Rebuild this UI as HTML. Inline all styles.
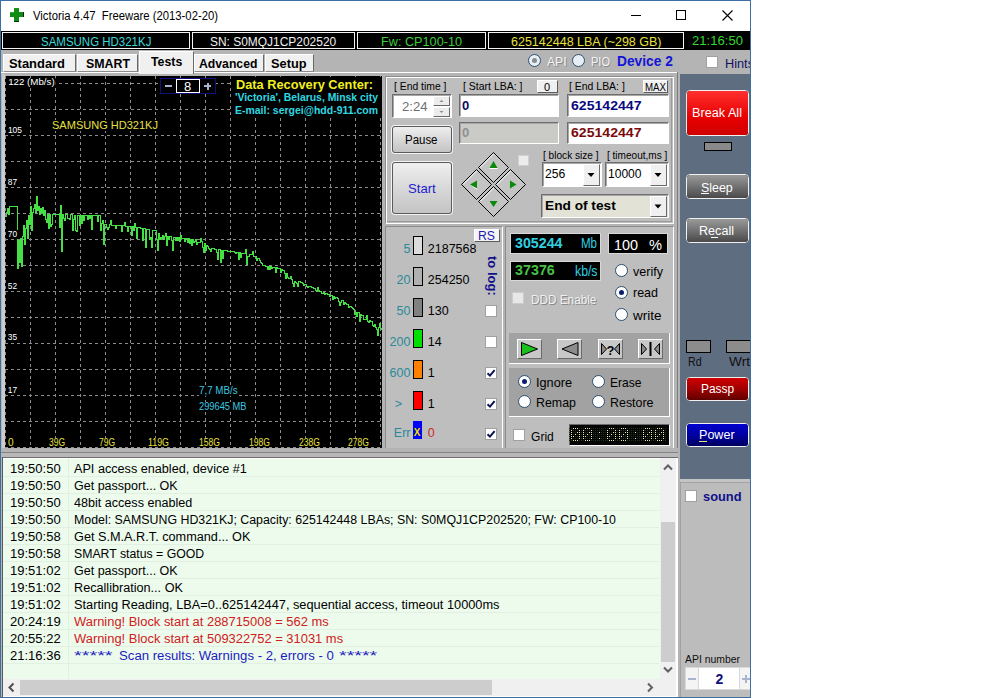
<!DOCTYPE html>
<html><head><meta charset="utf-8"><style>
html,body{margin:0;padding:0;background:#fff;}
body{width:1008px;height:698px;overflow:hidden;position:relative;font-family:'Liberation Sans', sans-serif;}
body>div,body>svg{position:absolute;white-space:pre;}
</style></head><body>
<div style="left:0px;top:0px;width:751px;height:698px;background:#fff"></div>
<div style="left:1px;top:31px;width:749px;height:666px;background:#b4b4b4"></div>
<div style="left:1px;top:1px;width:749px;height:30px;background:#fff"></div>
<div style="left:14px;top:8px;width:5px;height:14px;background:#0e8c14"></div>
<div style="left:10px;top:12px;width:14px;height:5px;background:#0e8c14"></div>
<div style="left:14px;top:21px;width:5px;height:1px;background:#032a03"></div>
<div style="left:23px;top:12px;width:1px;height:5px;background:#032a03"></div>
<div style="left:10px;top:12px;width:4px;height:1px;background:#30b030"></div>
<div style="left:14px;top:8px;width:5px;height:1px;background:#1a9a1a"></div>
<div style="left:33.3px;top:10.24px;font-size:12px;line-height:12px;font-weight:400;color:#000;transform:scaleX(0.9413);transform-origin:0 0;">Victoria 4.47  Freeware (2013-02-20)</div>
<div style="left:631px;top:15px;width:10px;height:1px;background:#000"></div>
<div style="left:676px;top:10px;width:10px;height:10px;border:1px solid #000;box-sizing:border-box"></div>
<svg style="left:722px;top:10px" width="11" height="11" viewBox="0 0 11 11"><path d="M0.5 0.5L10.5 10.5M10.5 0.5L0.5 10.5" stroke="#000" stroke-width="1.1"/></svg>
<div style="left:1px;top:31px;width:749px;height:19px;background:#000"></div>
<div style="left:2px;top:32px;width:188px;height:17px;border:1px solid #f4f4f4;box-sizing:border-box"></div>
<div style="left:192px;top:32px;width:163px;height:17px;border:1px solid #f4f4f4;box-sizing:border-box"></div>
<div style="left:357px;top:32px;width:129px;height:17px;border:1px solid #f4f4f4;box-sizing:border-box"></div>
<div style="left:488px;top:32px;width:196px;height:17px;border:1px solid #f4f4f4;box-sizing:border-box"></div>
<div style="left:40.6px;top:35.84px;font-size:12px;line-height:12px;font-weight:400;color:#3cd8d8;transform:scaleX(0.9569);transform-origin:0 0;">SAMSUNG HD321KJ</div>
<div style="left:210.0px;top:35.84px;font-size:12px;line-height:12px;font-weight:400;color:#f0f0f0;transform:scaleX(0.9958);transform-origin:0 0;">SN: S0MQJ1CP202520</div>
<div style="left:380.5px;top:35.84px;font-size:12px;line-height:12px;font-weight:400;color:#3ccc3c;transform:scaleX(1.0560);transform-origin:0 0;">Fw: CP100-10</div>
<div style="left:510.8px;top:35.84px;font-size:12px;line-height:12px;font-weight:400;color:#e8e040;transform:scaleX(1.0419);transform-origin:0 0;">625142448 LBA (~298 GB)</div>
<div style="left:691.5px;top:35.42px;font-size:12.5px;line-height:12.5px;font-weight:400;color:#30d830;transform:scaleX(1.0478);transform-origin:0 0;">21:16:50</div>
<div style="left:3px;top:54px;width:73px;height:18px;background:#f0f0f0;border-top:1px solid #fff;border-left:1px solid #fff;border-right:1px solid #696969;box-sizing:border-box;border-bottom:1px solid #a0a0a0"></div>
<div style="left:4px;top:71px;width:72px;height:1px;background:#8c8c8c"></div>
<div style="left:9.0px;top:57.30px;font-size:13px;line-height:13px;font-weight:700;color:#000;transform:scaleX(0.9939);transform-origin:0 0;">Standard</div>
<div style="left:77px;top:54px;width:61px;height:18px;background:#f0f0f0;border-top:1px solid #fff;border-left:1px solid #fff;border-right:1px solid #696969;box-sizing:border-box;border-bottom:1px solid #a0a0a0"></div>
<div style="left:78px;top:71px;width:60px;height:1px;background:#8c8c8c"></div>
<div style="left:86.0px;top:57.30px;font-size:13px;line-height:13px;font-weight:700;color:#000;transform:scaleX(0.9520);transform-origin:0 0;">SMART</div>
<div style="left:139px;top:51px;width:55px;height:23px;background:#f0f0f0;border-top:1px solid #fff;border-left:1px solid #fff;border-right:1px solid #696969;box-sizing:border-box;"></div>
<div style="left:150.7px;top:55.30px;font-size:13px;line-height:13px;font-weight:700;color:#000;transform:scaleX(0.9485);transform-origin:0 0;">Tests</div>
<div style="left:194px;top:54px;width:70px;height:18px;background:#f0f0f0;border-top:1px solid #fff;border-left:1px solid #fff;border-right:1px solid #696969;box-sizing:border-box;border-bottom:1px solid #a0a0a0"></div>
<div style="left:195px;top:71px;width:69px;height:1px;background:#8c8c8c"></div>
<div style="left:199.0px;top:57.30px;font-size:13px;line-height:13px;font-weight:700;color:#000;transform:scaleX(0.9398);transform-origin:0 0;">Advanced</div>
<div style="left:265px;top:54px;width:49px;height:18px;background:#f0f0f0;border-top:1px solid #fff;border-left:1px solid #fff;border-right:1px solid #696969;box-sizing:border-box;border-bottom:1px solid #a0a0a0"></div>
<div style="left:266px;top:71px;width:48px;height:1px;background:#8c8c8c"></div>
<div style="left:270.5px;top:57.30px;font-size:13px;line-height:13px;font-weight:700;color:#000;transform:scaleX(0.9827);transform-origin:0 0;">Setup</div>
<div style="left:1px;top:72px;width:138px;height:1px;background:#fff"></div>
<div style="left:194px;top:72px;width:483px;height:1px;background:#fff"></div>
<div style="left:677px;top:72px;width:1px;height:378px;background:#7c7c7c"></div>
<div style="left:527.9px;top:53.9px;width:13px;height:13px;border-radius:50%;border:1px solid #2c4e6e;box-sizing:border-box;background:#e6eef6"></div>
<div style="left:531.9px;top:57.9px;width:5px;height:5px;border-radius:50%;background:#8a8a8a"></div>
<div style="left:547.0px;top:55.84px;font-size:12px;line-height:12px;font-weight:400;color:#f4f4f4;transform:scaleX(1.0132);transform-origin:0 0;text-shadow:1px 1px 0 #8a8a8a">API</div>
<div style="left:572.0px;top:53.9px;width:13px;height:13px;border-radius:50%;border:1px solid #2c4e6e;box-sizing:border-box;background:#e6eef6"></div>
<div style="left:591.4px;top:55.84px;font-size:12px;line-height:12px;font-weight:400;color:#f4f4f4;transform:scaleX(0.9191);transform-origin:0 0;text-shadow:1px 1px 0 #8a8a8a">PIO</div>
<div style="left:616.7px;top:54.15px;font-size:14px;line-height:14px;font-weight:700;color:#1414d8;transform:scaleX(0.9819);transform-origin:0 0;">Device 2</div>
<div style="left:706px;top:56px;width:12px;height:12px;background:#fff;border:1px solid #a0a0a0;box-sizing:border-box"></div>
<div style="left:724.8px;top:57.00px;font-size:13px;line-height:13px;font-weight:400;color:#12125e;transform:scaleX(0.9789);transform-origin:0 0;">Hints</div>
<div style="left:2px;top:74px;width:3px;height:376px;background:#cccccc"></div>
<div style="left:5px;top:76px;width:377px;height:372px;background:#000"></div>
<svg style="left:5px;top:76px" width="377" height="372" viewBox="5 76 377 372"><path d="M5.5 76V448M30.5 76V448M55.5 76V448M80.5 76V448M105.5 76V448M130.5 76V448M155.5 76V448M180.5 76V448M205.5 76V448M230.5 76V448M255.5 76V448M280.5 76V448M305.5 76V448M330.5 76V448M355.5 76V448M380.5 76V448M5 83.5H382M5 109.5H382M5 135.5H382M5 161.5H382M5 187.5H382M5 213.5H382M5 239.5H382M5 265.5H382M5 291.5H382M5 317.5H382M5 343.5H382M5 369.5H382M5 395.5H382M5 421.5H382M5 447.5H382" stroke="#8c8c8c" stroke-width="1" stroke-dasharray="3 3" fill="none"/><path d="M5 216.5H6V212.5H7V208.5H8V214.5H9V206.5H10V206.5H11V206.5H12V206.5H13V206.5H14V206.5H15V206.5H16V206.5H17V268.5H18V240.5H19V262.5H20V238.5H21V266.5H22V236.5H23V225.5H24V244.5H25V228.5H26V220.5H27V238.5H28V215.5H29V224.5H30V206.5H31V230.5H32V212.5H33V208.5H34V204.5H35V212.5H36V196.5H37V210.5H38V206.5H39V214.5H40V208.5H41V212.5H42V207.5H43V215.5H44V210.5H45V219.5H46V222.5H47V214.5H48V228.5H49V214.5H50V226.5H51V224.5H52V214.5H53V214.5H54V214.5H55V214.5H56V214.5H57V214.5H58V214.5H59V227.5H60V205.5H61V251.5H62V214.5H63V218.5H64V220.5H65V214.5H66V214.5H67V218.5H68V218.5H69V219.5H70V214.5H71V214.5H72V230.5H73V219.5H74V215.5H75V230.5H76V231.5H77V215.5H78V215.5H79V225.5H80V215.5H81V223.5H82V215.5H83V220.5H84V215.5H85V215.5H86V215.5H87V219.5H88V215.5H89V218.5H90V215.5H91V229.5H92V215.5H93V215.5H94V215.5H95V215.5H96V215.5H97V221.5H98V215.5H99V215.5H100V230.5H101V223.5H102V220.5H103V244.5H104V224.5H105V224.5H106V227.5H107V229.5H108V227.5H109V224.5H110V220.5H111V225.5H112V225.5H113V225.5H114V225.5H115V228.5H116V225.5H117V225.5H118V225.5H119V225.5H120V225.5H121V231.5H122V225.5H123V225.5H124V222.5H125V226.5H126V226.5H127V231.5H128V226.5H129V226.5H130V226.5H131V235.5H132V226.5H133V230.5H134V223.5H135V227.5H136V238.5H137V227.5H138V227.5H139V227.5H140V228.5H141V228.5H142V240.5H143V228.5H144V228.5H145V247.5H146V229.5H147V229.5H148V229.5H149V239.5H150V237.5H151V247.5H152V230.5H153V230.5H154V230.5H155V230.5H156V239.5H157V250.5H158V233.5H159V239.5H160V237.5H161V238.5H162V235.5H163V239.5H164V236.5H165V233.5H166V245.5H167V236.5H168V239.5H169V236.5H170V236.5H171V240.5H172V250.5H173V237.5H174V237.5H175V240.5H176V237.5H177V240.5H178V237.5H179V241.5H180V235.5H181V238.5H182V238.5H183V238.5H184V241.5H185V238.5H186V238.5H187V242.5H188V238.5H189V243.5H190V239.5H191V245.5H192V239.5H193V242.5H194V241.5H195V239.5H196V244.5H197V242.5H198V242.5H199V242.5H200V238.5H201V241.5H202V247.5H203V252.5H204V243.5H205V250.5H206V245.5H207V246.5H208V248.5H209V249.5H210V251.5H211V248.5H212V248.5H213V248.5H214V249.5H215V249.5H216V252.5H217V259.5H218V249.5H219V249.5H220V262.5H221V250.5H222V258.5H223V250.5H224V250.5H225V250.5H226V250.5H227V251.5H228V251.5H229V251.5H230V251.5H231V251.5H232V251.5H233V251.5H234V252.5H235V253.5H236V252.5H237V252.5H238V259.5H239V252.5H240V257.5H241V253.5H242V253.5H243V253.5H244V253.5H245V249.5H246V264.5H247V256.5H248V256.5H249V254.5H250V254.5H251V254.5H252V251.5H253V256.5H254V256.5H255V256.5H256V260.5H257V258.5H258V258.5H259V260.5H260V262.5H261V263.5H262V265.5H263V265.5H264V265.5H265V266.5H266V266.5H267V269.5H268V266.5H269V269.5H270V266.5H271V268.5H272V267.5H273V267.5H274V267.5H275V272.5H276V267.5H277V268.5H278V268.5H279V268.5H280V272.5H281V269.5H282V270.5H283V270.5H284V273.5H285V278.5H286V273.5H287V277.5H288V278.5H289V278.5H290V276.5H291V279.5H292V283.5H293V286.5H294V281.5H295V282.5H296V283.5H297V286.5H298V281.5H299V281.5H300V282.5H301V282.5H302V283.5H303V285.5H304V284.5H305V284.5H306V286.5H307V287.5H308V286.5H309V286.5H310V286.5H311V287.5H312V287.5H313V288.5H314V288.5H315V290.5H316V291.5H317V287.5H318V290.5H319V291.5H320V291.5H321V293.5H322V293.5H323V292.5H324V294.5H325V293.5H326V293.5H327V294.5H328V294.5H329V296.5H330V295.5H331V295.5H332V299.5H333V296.5H334V298.5H335V297.5H336V297.5H337V298.5H338V301.5H339V305.5H340V302.5H341V300.5H342V300.5H343V304.5H344V302.5H345V303.5H346V304.5H347V304.5H348V307.5H349V306.5H350V306.5H351V307.5H352V308.5H353V309.5H354V314.5H355V312.5H356V316.5H357V312.5H358V312.5H359V321.5H360V314.5H361V315.5H362V315.5H363V319.5H364V319.5H365V319.5H366V315.5H367V321.5H368V322.5H369V320.5H370V321.5H371V321.5H372V325.5H373V326.5H374V324.5H375V327.5H376V329.5H377V335.5H378V327.5H379V323.5H380V328.5H381V329.5" stroke="#44e044" stroke-width="1" fill="none" shape-rendering="crispEdges"/></svg>
<div style="left:5.5px;top:77.78px;font-size:9px;line-height:9px;font-weight:400;color:#fff;transform:scaleX(1.0810);transform-origin:0 0;background:#000;padding:0 1px 0 2px">122 (Mb/s)</div>
<div style="left:5.5px;top:126.38px;font-size:9px;line-height:9px;font-weight:400;color:#fff;transform:scaleX(0.9447);transform-origin:0 0;background:#000;padding:0 1px 0 2px">105</div>
<div style="left:5.5px;top:178.38px;font-size:9px;line-height:9px;font-weight:400;color:#fff;transform:scaleX(0.9285);transform-origin:0 0;background:#000;padding:0 1px 0 2px">87</div>
<div style="left:5.5px;top:230.38px;font-size:9px;line-height:9px;font-weight:400;color:#fff;transform:scaleX(0.9285);transform-origin:0 0;background:#000;padding:0 1px 0 2px">70</div>
<div style="left:5.5px;top:282.38px;font-size:9px;line-height:9px;font-weight:400;color:#fff;transform:scaleX(0.9285);transform-origin:0 0;background:#000;padding:0 1px 0 2px">52</div>
<div style="left:5.5px;top:333.38px;font-size:9px;line-height:9px;font-weight:400;color:#fff;transform:scaleX(0.9285);transform-origin:0 0;background:#000;padding:0 1px 0 2px">35</div>
<div style="left:5.5px;top:385.88px;font-size:9px;line-height:9px;font-weight:400;color:#fff;transform:scaleX(0.9285);transform-origin:0 0;background:#000;padding:0 1px 0 2px">17</div>
<div style="left:49.0px;top:437.54px;font-size:10px;line-height:10px;font-weight:400;color:#e8e040;transform:scaleX(0.8463);transform-origin:0 0;background:#000">39G</div>
<div style="left:99.0px;top:437.54px;font-size:10px;line-height:10px;font-weight:400;color:#e8e040;transform:scaleX(0.8463);transform-origin:0 0;background:#000">79G</div>
<div style="left:148.0px;top:437.54px;font-size:10px;line-height:10px;font-weight:400;color:#e8e040;transform:scaleX(0.8848);transform-origin:0 0;background:#000">119G</div>
<div style="left:199.0px;top:437.54px;font-size:10px;line-height:10px;font-weight:400;color:#e8e040;transform:scaleX(0.8582);transform-origin:0 0;background:#000">158G</div>
<div style="left:249.0px;top:437.54px;font-size:10px;line-height:10px;font-weight:400;color:#e8e040;transform:scaleX(0.8582);transform-origin:0 0;background:#000">198G</div>
<div style="left:299.0px;top:437.54px;font-size:10px;line-height:10px;font-weight:400;color:#e8e040;transform:scaleX(0.8582);transform-origin:0 0;background:#000">238G</div>
<div style="left:348.0px;top:437.54px;font-size:10px;line-height:10px;font-weight:400;color:#e8e040;transform:scaleX(0.8582);transform-origin:0 0;background:#000">278G</div>
<div style="left:8.0px;top:437.54px;font-size:10px;line-height:10px;font-weight:400;color:#e8e040;background:#000">0</div>
<svg style="left:5px;top:447px" width="377" height="1" viewBox="5 447 377 1"><path d="M5 447.5H382" stroke="#8c8c8c" stroke-dasharray="3 3"/></svg>
<div style="left:51.5px;top:119.69px;font-size:11px;line-height:11px;font-weight:400;color:#e8e040;transform:scaleX(1.0022);transform-origin:0 0;background:#000">SAMSUNG HD321KJ</div>
<div style="left:199.0px;top:385.54px;font-size:10px;line-height:10px;font-weight:400;color:#3cc8e0;transform:scaleX(0.9780);transform-origin:0 0;background:#000">7,7 MB/s</div>
<div style="left:199.0px;top:401.54px;font-size:10px;line-height:10px;font-weight:400;color:#3cc8e0;transform:scaleX(0.9285);transform-origin:0 0;background:#000">299645 MB</div>
<div style="left:160px;top:78px;width:56px;height:16px;background:#000;border:1px solid #10107a;box-sizing:border-box"></div>
<div style="left:176px;top:79px;width:24px;height:14px;border:1px solid #fff;box-sizing:border-box;background:#000"></div>
<div style="left:184.0px;top:80.00px;font-size:13px;line-height:13px;font-weight:400;color:#fff;">8</div>
<div style="left:165px;top:85px;width:7px;height:2px;background:#a8b4d0"></div>
<div style="left:204px;top:85px;width:7px;height:2px;background:#a8b4d0"></div>
<div style="left:206.5px;top:82.5px;width:2px;height:7px;background:#a8b4d0"></div>
<div style="left:233px;top:77px;width:148px;height:40px;background:#000"></div>
<div style="left:235.7px;top:78.84px;font-size:12px;line-height:12px;font-weight:700;color:#f0f020;transform:scaleX(1.0643);transform-origin:0 0;background:#000">Data Recovery Center:</div>
<div style="left:234.5px;top:92.19px;font-size:11px;line-height:11px;font-weight:700;color:#30d8e0;transform:scaleX(0.9460);transform-origin:0 0;background:#000">'Victoria', Belarus, Minsk city</div>
<div style="left:234.5px;top:104.69px;font-size:11px;line-height:11px;font-weight:700;color:#30d8e0;transform:scaleX(0.9526);transform-origin:0 0;background:#000">E-mail: sergei@hdd-911.com</div>
<div style="left:385px;top:76px;width:288px;height:147px;border:1px solid #8c8c8c;box-sizing:border-box"></div>
<div style="left:386px;top:77px;width:288px;height:147px;border:1px solid #fff;box-sizing:border-box;background:#bebebe"></div>
<div style="left:387px;top:78px;width:285px;height:144px;border-right:1px solid #9a9a9a;border-bottom:1px solid #9a9a9a;box-sizing:border-box"></div>
<div style="left:394.3px;top:81.19px;font-size:11px;line-height:11px;font-weight:400;color:#000;transform:scaleX(0.9418);transform-origin:0 0;">[ End time ]</div>
<div style="left:463.3px;top:81.19px;font-size:11px;line-height:11px;font-weight:400;color:#000;transform:scaleX(0.9541);transform-origin:0 0;">[ Start LBA: ]</div>
<div style="left:569.4px;top:81.19px;font-size:11px;line-height:11px;font-weight:400;color:#000;transform:scaleX(0.9505);transform-origin:0 0;">[ End LBA: ]</div>
<div style="left:392px;top:94px;width:60px;height:24px;background:#fff;border-top:1px solid #6e6e6e;border-left:1px solid #6e6e6e;border-right:1px solid #fff;border-bottom:1px solid #fff;box-sizing:border-box;box-shadow:inset 1px 1px 0 #a8a8a8"></div>
<div style="left:402.0px;top:100.00px;font-size:13px;line-height:13px;font-weight:400;color:#707070;transform:scaleX(1.0114);transform-origin:0 0;">2:24</div>
<div style="left:433px;top:96px;width:17px;height:10px;background:#ececec;border-top:1px solid #fff;border-left:1px solid #fff;border-right:1px solid #6a6a6a;border-bottom:1px solid #6a6a6a;box-sizing:border-box"></div>
<div style="left:433px;top:107px;width:17px;height:10px;background:#ececec;border-top:1px solid #fff;border-left:1px solid #fff;border-right:1px solid #6a6a6a;border-bottom:1px solid #6a6a6a;box-sizing:border-box"></div>
<svg style="left:433px;top:96px" width="17" height="21" viewBox="0 0 17 21"><path d="M6.5 6h4l-2-2z" fill="#8a8a8a"/><path d="M6.5 15h4l-2 2z" fill="#8a8a8a"/></svg>
<div style="left:459px;top:94px;width:100px;height:23px;background:#fff;border-top:1px solid #6e6e6e;border-left:1px solid #6e6e6e;border-right:1px solid #fff;border-bottom:1px solid #fff;box-sizing:border-box;box-shadow:inset 1px 1px 0 #a8a8a8"></div>
<div style="left:462.0px;top:99.00px;font-size:13px;line-height:13px;font-weight:700;color:#0a0a60;">0</div>
<div style="left:537px;top:80px;width:21px;height:13px;background:#f0f0f0;border-top:1px solid #fff;border-left:1px solid #fff;border-right:1px solid #5a5a5a;border-bottom:1px solid #5a5a5a;box-sizing:border-box"></div>
<div style="left:544.0px;top:81.69px;font-size:11px;line-height:11px;font-weight:400;color:#000;">0</div>
<div style="left:567px;top:94px;width:102px;height:23px;background:#fff;border-top:1px solid #6e6e6e;border-left:1px solid #6e6e6e;border-right:1px solid #fff;border-bottom:1px solid #fff;box-sizing:border-box;box-shadow:inset 1px 1px 0 #a8a8a8"></div>
<div style="left:570.5px;top:98.50px;font-size:13px;line-height:13px;font-weight:700;color:#0a0a80;transform:scaleX(1.0833);transform-origin:0 0;">625142447</div>
<div style="left:643px;top:80px;width:25px;height:13px;background:#f0f0f0;border-top:1px solid #fff;border-left:1px solid #fff;border-right:1px solid #5a5a5a;border-bottom:1px solid #5a5a5a;box-sizing:border-box"></div>
<div style="left:645.0px;top:81.69px;font-size:11px;line-height:11px;font-weight:400;color:#000;transform:scaleX(0.8807);transform-origin:0 0;">MAX</div>
<div style="left:459px;top:122px;width:100px;height:22px;background:#cacac6;border-top:1px solid #6e6e6e;border-left:1px solid #6e6e6e;border-right:1px solid #fff;border-bottom:1px solid #fff;box-sizing:border-box;box-shadow:inset 1px 1px 0 #a8a8a8"></div>
<div style="left:462.0px;top:126.00px;font-size:13px;line-height:13px;font-weight:700;color:#909090;">0</div>
<div style="left:567px;top:122px;width:102px;height:22px;background:#fff;border-top:1px solid #6e6e6e;border-left:1px solid #6e6e6e;border-right:1px solid #fff;border-bottom:1px solid #fff;box-sizing:border-box;box-shadow:inset 1px 1px 0 #a8a8a8"></div>
<div style="left:570.5px;top:126.00px;font-size:13px;line-height:13px;font-weight:700;color:#7a0a0a;transform:scaleX(1.0833);transform-origin:0 0;">625142447</div>
<div style="left:392px;top:126px;width:60px;height:27px;border-radius:3px;border:1px solid #5a5a5a;box-sizing:border-box;background:linear-gradient(#efefef,#d8d8d8 50%,#c4c4c4);box-shadow:0 0 0 1px #f4f4f4"></div>
<div style="left:404.6px;top:133.84px;font-size:12px;line-height:12px;font-weight:400;color:#000;transform:scaleX(0.9550);transform-origin:0 0;">Pause</div>
<div style="left:392px;top:162px;width:60px;height:52px;border-radius:3px;border:1px solid #5a5a5a;box-sizing:border-box;background:linear-gradient(#efefef,#d8d8d8 50%,#c4c4c4);box-shadow:0 0 0 1px #f4f4f4"></div>
<div style="left:407.8px;top:182.00px;font-size:13px;line-height:13px;font-weight:400;color:#1c1cd0;transform:scaleX(1.0084);transform-origin:0 0;">Start</div>
<svg style="left:458px;top:150px" width="72" height="72" viewBox="458 150 72 72"><g stroke="#000" stroke-width="1" fill="#c4c4c4"><path d="M493.5 152.5 L508.5 167.5 L493.5 182.5 L478.5 167.5 Z"/><path d="M510.5 169.5 L525.5 184.5 L510.5 199.5 L495.5 184.5 Z"/><path d="M493.5 186.5 L508.5 201.5 L493.5 216.5 L478.5 201.5 Z"/><path d="M476.5 169.5 L491.5 184.5 L476.5 199.5 L461.5 184.5 Z"/></g><g stroke="#fff" stroke-width="1" fill="none"><path d="M480 167.5 L493.5 154"/><path d="M497 184.5 L510.5 171"/><path d="M480 201.5 L493.5 188"/><path d="M463 184.5 L476.5 171"/></g><g fill="#0a8a0a"><path d="M489.5 168 h8 l-4 -7z"/><path d="M489.5 201 h8 l-4 6z"/><path d="M477 180.5 v8 l-7 -4z"/><path d="M510 180.5 v8 l6.5 -4z"/></g><g fill="#fff"><path d="M489.5 168 h8 v1 h-8z"/><path d="M477 188.5 v1 l-7 -4.5z"/></g></svg>
<div style="left:518px;top:155px;width:11px;height:11px;background:#ececec;border:1px solid #d0d0d0;box-sizing:border-box"></div>
<div style="left:542.7px;top:150.19px;font-size:11px;line-height:11px;font-weight:400;color:#000;transform:scaleX(0.9185);transform-origin:0 0;">[ block size ]</div>
<div style="left:607.0px;top:150.19px;font-size:11px;line-height:11px;font-weight:400;color:#000;transform:scaleX(0.9132);transform-origin:0 0;">[ timeout,ms ]</div>
<div style="left:542px;top:162px;width:60px;height:25px;background:#fff;border-top:1px solid #6e6e6e;border-left:1px solid #6e6e6e;border-right:1px solid #fff;border-bottom:1px solid #fff;box-sizing:border-box;box-shadow:inset 1px 1px 0 #a8a8a8"></div>
<div style="left:583px;top:164px;width:17px;height:22px;background:#f0f0f0;border-top:1px solid #fff;border-left:1px solid #fff;border-right:1px solid #6a6a6a;border-bottom:1px solid #6a6a6a;box-sizing:border-box"></div>
<svg style="left:583px;top:164px" width="17" height="22" viewBox="0 0 17 22"><path d="M4.5 9.0 h7 l-3.5 4z" fill="#000"/></svg>
<div style="left:545.0px;top:167.30px;font-size:13px;line-height:13px;font-weight:400;color:#000;transform:scaleX(0.9353);transform-origin:0 0;">256</div>
<div style="left:605px;top:162px;width:64px;height:25px;background:#fff;border-top:1px solid #6e6e6e;border-left:1px solid #6e6e6e;border-right:1px solid #fff;border-bottom:1px solid #fff;box-sizing:border-box;box-shadow:inset 1px 1px 0 #a8a8a8"></div>
<div style="left:650px;top:164px;width:17px;height:22px;background:#f0f0f0;border-top:1px solid #fff;border-left:1px solid #fff;border-right:1px solid #6a6a6a;border-bottom:1px solid #6a6a6a;box-sizing:border-box"></div>
<svg style="left:650px;top:164px" width="17" height="22" viewBox="0 0 17 22"><path d="M4.5 9.0 h7 l-3.5 4z" fill="#000"/></svg>
<div style="left:608.0px;top:167.30px;font-size:13px;line-height:13px;font-weight:400;color:#000;transform:scaleX(0.9265);transform-origin:0 0;">10000</div>
<div style="left:541px;top:194px;width:128px;height:24px;background:#e2e2d6;border-top:1px solid #6e6e6e;border-left:1px solid #6e6e6e;border-right:1px solid #fff;border-bottom:1px solid #fff;box-sizing:border-box;box-shadow:inset 1px 1px 0 #a8a8a8"></div>
<div style="left:650px;top:196px;width:17px;height:21px;background:#f0f0f0;border-top:1px solid #fff;border-left:1px solid #fff;border-right:1px solid #6a6a6a;border-bottom:1px solid #6a6a6a;box-sizing:border-box"></div>
<svg style="left:650px;top:196px" width="17" height="21" viewBox="0 0 17 21"><path d="M4.5 8.5 h7 l-3.5 4z" fill="#000"/></svg>
<div style="left:545.0px;top:198.80px;font-size:13px;line-height:13px;font-weight:700;color:#000;transform:scaleX(1.0525);transform-origin:0 0;">End of test</div>
<div style="left:385px;top:226px;width:117px;height:222px;border:1px solid #8c8c8c;box-sizing:border-box"></div>
<div style="left:386px;top:227px;width:117px;height:222px;border-right:1px solid #fff;border-bottom:1px solid #fff;box-sizing:border-box;background:#bebebe"></div>
<div style="left:474px;top:229px;width:26px;height:13px;background:#f4f4f4;border-top:1px solid #fff;border-left:1px solid #fff;border-right:1px solid #5a5a5a;border-bottom:1px solid #5a5a5a;box-sizing:border-box"></div>
<div style="left:478.0px;top:229.84px;font-size:12px;line-height:12px;font-weight:400;color:#1c1cb0;transform:scaleX(1.0197);transform-origin:0 0;">RS</div>
<div style="left:403.5px;top:243.02px;font-size:12.5px;line-height:12.5px;font-weight:400;color:#2a8a9a;">5</div>
<div style="left:413px;top:236px;width:10px;height:19px;background:#dcdcdc;border:1px solid #000;box-sizing:border-box"></div>
<div style="left:427.8px;top:243.02px;font-size:12.5px;line-height:12.5px;font-weight:400;color:#000;">2187568</div>
<div style="left:396.6px;top:274.02px;font-size:12.5px;line-height:12.5px;font-weight:400;color:#2a8a9a;">20</div>
<div style="left:413px;top:267px;width:10px;height:19px;background:#b0b0b0;border:1px solid #000;box-sizing:border-box"></div>
<div style="left:427.8px;top:274.02px;font-size:12.5px;line-height:12.5px;font-weight:400;color:#000;">254250</div>
<div style="left:396.6px;top:305.02px;font-size:12.5px;line-height:12.5px;font-weight:400;color:#2a8a9a;">50</div>
<div style="left:413px;top:298px;width:10px;height:19px;background:#808080;border:1px solid #000;box-sizing:border-box"></div>
<div style="left:427.8px;top:305.02px;font-size:12.5px;line-height:12.5px;font-weight:400;color:#000;">130</div>
<div style="left:485px;top:305px;width:12px;height:12px;background:#fff;border:1px solid #a0a0a0;box-sizing:border-box"></div>
<div style="left:389.6px;top:336.02px;font-size:12.5px;line-height:12.5px;font-weight:400;color:#2a8a9a;">200</div>
<div style="left:413px;top:329px;width:10px;height:19px;background:#00e000;border:1px solid #000;box-sizing:border-box"></div>
<div style="left:427.8px;top:336.02px;font-size:12.5px;line-height:12.5px;font-weight:400;color:#000;">14</div>
<div style="left:485px;top:336px;width:12px;height:12px;background:#fff;border:1px solid #a0a0a0;box-sizing:border-box"></div>
<div style="left:389.6px;top:367.02px;font-size:12.5px;line-height:12.5px;font-weight:400;color:#2a8a9a;">600</div>
<div style="left:413px;top:360px;width:10px;height:19px;background:#ff8000;border:1px solid #000;box-sizing:border-box"></div>
<div style="left:427.8px;top:367.02px;font-size:12.5px;line-height:12.5px;font-weight:400;color:#000;">1</div>
<div style="left:485px;top:367px;width:12px;height:12px;background:#fff;border:1px solid #a0a0a0;box-sizing:border-box"></div>
<svg style="left:485px;top:367px" width="12" height="12" viewBox="0 0 12 12"><path d="M2.5 6.2L5 8.6L9.6 3.2" stroke="#0a1450" stroke-width="2" fill="none"/></svg>
<div style="left:394.7px;top:398.02px;font-size:12.5px;line-height:12.5px;font-weight:400;color:#2a8a9a;">&gt;</div>
<div style="left:413px;top:391px;width:10px;height:19px;background:#ff0000;border:1px solid #000;box-sizing:border-box"></div>
<div style="left:427.8px;top:398.02px;font-size:12.5px;line-height:12.5px;font-weight:400;color:#000;">1</div>
<div style="left:485px;top:398px;width:12px;height:12px;background:#fff;border:1px solid #a0a0a0;box-sizing:border-box"></div>
<svg style="left:485px;top:398px" width="12" height="12" viewBox="0 0 12 12"><path d="M2.5 6.2L5 8.6L9.6 3.2" stroke="#0a1450" stroke-width="2" fill="none"/></svg>
<div style="left:393.8px;top:426.62px;font-size:12.5px;line-height:12.5px;font-weight:400;color:#2a8a9a;">Err</div>
<div style="left:413px;top:421px;width:10px;height:19px;background:#0000ff;width:9px;height:18px"></div>
<div style="left:427.8px;top:426.62px;font-size:12.5px;line-height:12.5px;font-weight:400;color:#d02828;">0</div>
<div style="left:485px;top:428px;width:12px;height:12px;background:#fff;border:1px solid #a0a0a0;box-sizing:border-box"></div>
<svg style="left:485px;top:428px" width="12" height="12" viewBox="0 0 12 12"><path d="M2.5 6.2L5 8.6L9.6 3.2" stroke="#0a1450" stroke-width="2" fill="none"/></svg>
<div style="left:413.8px;top:427.54px;font-size:10px;line-height:10px;font-weight:700;color:#f0e020;text-shadow:0 0 1px #000">X</div>
<div style="left:484px;top:256px;width:16px;height:42px;"><div style="position:absolute;left:0;top:0;transform-origin:0 0;transform:translate(15px,0) rotate(90deg);font:700 13px 'Liberation Sans', sans-serif;color:#10108a;white-space:nowrap;line-height:13px">to log:</div></div>
<div style="left:505px;top:226px;width:168px;height:222px;border:1px solid #8c8c8c;box-sizing:border-box"></div>
<div style="left:506px;top:227px;width:168px;height:222px;border-right:1px solid #fff;border-bottom:1px solid #fff;box-sizing:border-box;background:#bebebe"></div>
<div style="left:510px;top:233px;width:91px;height:21px;background:#000;border:1px solid #d8d8d8;box-sizing:border-box"></div>
<div style="left:515.0px;top:235.65px;font-size:14px;line-height:14px;font-weight:700;color:#30d0e0;transform:scaleX(1.0167);transform-origin:0 0;">305244</div>
<div style="left:580.5px;top:236.15px;font-size:14px;line-height:14px;font-weight:400;color:#30d0e0;transform:scaleX(0.8225);transform-origin:0 0;">Mb</div>
<div style="left:608px;top:233px;width:60px;height:21px;background:#000;border:1px solid #d8d8d8;box-sizing:border-box"></div>
<div style="left:614.0px;top:237.30px;font-size:15px;line-height:15px;font-weight:400;color:#fff;transform:scaleX(0.9588);transform-origin:0 0;">100</div>
<div style="left:649.0px;top:237.30px;font-size:15px;line-height:15px;font-weight:400;color:#fff;transform:scaleX(0.9742);transform-origin:0 0;">%</div>
<div style="left:510px;top:261px;width:91px;height:20px;background:#000;border:1px solid #d8d8d8;box-sizing:border-box"></div>
<div style="left:515.0px;top:263.35px;font-size:14px;line-height:14px;font-weight:700;color:#48c048;transform:scaleX(1.0222);transform-origin:0 0;">37376</div>
<div style="left:574.6px;top:264.15px;font-size:14px;line-height:14px;font-weight:400;color:#30d0e0;transform:scaleX(0.8759);transform-origin:0 0;">kb/s</div>
<div style="left:512px;top:292px;width:12px;height:12px;background:#e8e8e8;border:1px solid #cccccc;box-sizing:border-box"></div>
<div style="left:531.0px;top:293.84px;font-size:12px;line-height:12px;font-weight:400;color:#f0f0f0;transform:scaleX(0.9805);transform-origin:0 0;text-shadow:1px 1px 0 #8a8a8a">DDD Enable</div>
<div style="left:614.9px;top:264.0px;width:13px;height:13px;border-radius:50%;border:1px solid #2c4e6e;box-sizing:border-box;background:#fff"></div>
<div style="left:633.0px;top:264.50px;font-size:13px;line-height:13px;font-weight:400;color:#000;transform:scaleX(0.9658);transform-origin:0 0;">verify</div>
<div style="left:614.9px;top:285.8px;width:13px;height:13px;border-radius:50%;border:1px solid #2c4e6e;box-sizing:border-box;background:#fff"></div>
<div style="left:618.9px;top:289.8px;width:5px;height:5px;border-radius:50%;background:#0a1e6e"></div>
<div style="left:633.0px;top:286.30px;font-size:13px;line-height:13px;font-weight:400;color:#000;transform:scaleX(0.9604);transform-origin:0 0;">read</div>
<div style="left:614.9px;top:308.1px;width:13px;height:13px;border-radius:50%;border:1px solid #2c4e6e;box-sizing:border-box;background:#fff"></div>
<div style="left:633.0px;top:308.60px;font-size:13px;line-height:13px;font-weight:400;color:#000;transform:scaleX(1.0381);transform-origin:0 0;">write</div>
<div style="left:509px;top:333px;width:161px;height:31px;background:#a2a2a2;border-right:1px solid #fff;border-bottom:1px solid #fff;box-sizing:border-box"></div>
<div style="left:517px;top:339px;width:25px;height:20px;background:#c8c8c8;border-top:1px solid #fff;border-left:1px solid #fff;border-right:1px solid #6a6a6a;border-bottom:1px solid #6a6a6a;box-sizing:border-box"></div>
<div style="left:557px;top:339px;width:25px;height:20px;background:#c8c8c8;border-top:1px solid #fff;border-left:1px solid #fff;border-right:1px solid #6a6a6a;border-bottom:1px solid #6a6a6a;box-sizing:border-box"></div>
<div style="left:598px;top:339px;width:25px;height:20px;background:#c8c8c8;border-top:1px solid #fff;border-left:1px solid #fff;border-right:1px solid #6a6a6a;border-bottom:1px solid #6a6a6a;box-sizing:border-box"></div>
<div style="left:638px;top:339px;width:25px;height:20px;background:#c8c8c8;border-top:1px solid #fff;border-left:1px solid #fff;border-right:1px solid #6a6a6a;border-bottom:1px solid #6a6a6a;box-sizing:border-box"></div>
<svg style="left:517px;top:339px" width="150" height="20" viewBox="517 339 150 20"><path d="M521.5 342.5 L537.5 349 L521.5 355.5 Z" fill="#1cc01c" stroke="#000" stroke-width="1"/><path d="M578 342.5 L562 349 L578 355.5 Z" fill="#8c8c8c" stroke="#000" stroke-width="1"/><path d="M601.5 343.5 L606.5 349 L601.5 354.5 Z" fill="#8c8c8c" stroke="#000" stroke-width="1"/><path d="M619.5 343.5 L614.5 349 L619.5 354.5 Z" fill="#8c8c8c" stroke="#000" stroke-width="1"/><path d="M641.5 343.5 L646.5 349 L641.5 354.5 Z" fill="#8c8c8c" stroke="#000" stroke-width="1"/><path d="M659.5 343.5 L654.5 349 L659.5 354.5 Z" fill="#8c8c8c" stroke="#000" stroke-width="1"/><rect x="649.5" y="342" width="2" height="14" fill="#000"/></svg>
<div style="left:606.5px;top:344.00px;font-size:13px;line-height:13px;font-weight:700;color:#000;">?</div>
<div style="left:509px;top:368px;width:161px;height:49px;background:#a2a2a2;border-right:1px solid #fff;border-bottom:1px solid #fff;box-sizing:border-box"></div>
<div style="left:518.0px;top:375.3px;width:13px;height:13px;border-radius:50%;border:1px solid #2c4e6e;box-sizing:border-box;background:#fff"></div>
<div style="left:522.0px;top:379.3px;width:5px;height:5px;border-radius:50%;background:#0a1e6e"></div>
<div style="left:536.0px;top:375.80px;font-size:13px;line-height:13px;font-weight:400;color:#000;transform:scaleX(0.9763);transform-origin:0 0;">Ignore</div>
<div style="left:591.8px;top:375.3px;width:13px;height:13px;border-radius:50%;border:1px solid #2c4e6e;box-sizing:border-box;background:#fff"></div>
<div style="left:609.8px;top:375.80px;font-size:13px;line-height:13px;font-weight:400;color:#000;transform:scaleX(0.9244);transform-origin:0 0;">Erase</div>
<div style="left:518.0px;top:395.3px;width:13px;height:13px;border-radius:50%;border:1px solid #2c4e6e;box-sizing:border-box;background:#fff"></div>
<div style="left:536.0px;top:395.80px;font-size:13px;line-height:13px;font-weight:400;color:#000;transform:scaleX(0.9542);transform-origin:0 0;">Remap</div>
<div style="left:591.8px;top:395.3px;width:13px;height:13px;border-radius:50%;border:1px solid #2c4e6e;box-sizing:border-box;background:#fff"></div>
<div style="left:609.8px;top:395.80px;font-size:13px;line-height:13px;font-weight:400;color:#000;transform:scaleX(0.9554);transform-origin:0 0;">Restore</div>
<div style="left:513px;top:429px;width:12px;height:12px;background:#fff;border:1px solid #a0a0a0;box-sizing:border-box"></div>
<div style="left:531.0px;top:429.50px;font-size:13px;line-height:13px;font-weight:400;color:#000;transform:scaleX(0.9282);transform-origin:0 0;">Grid</div>
<div style="left:569px;top:424px;width:101px;height:22px;background:#050505;border-top:1px solid #6a6a6a;border-left:1px solid #6a6a6a;border-right:1px solid #fff;border-bottom:1px solid #fff;box-sizing:border-box"></div>
<svg style="left:0;top:0" width="680" height="450"><path d="M569 428h1v1h-1zM569 430h1v1h-1zM569 432h1v1h-1zM569 434h1v1h-1zM569 436h1v1h-1zM569 438h1v1h-1zM569 440h1v1h-1zM571 428h1v1h-1zM571 440h1v1h-1zM573 430h1v1h-1zM573 432h1v1h-1zM573 434h1v1h-1zM573 438h1v1h-1zM575 430h1v1h-1zM575 432h1v1h-1zM575 436h1v1h-1zM575 438h1v1h-1zM577 430h1v1h-1zM577 434h1v1h-1zM577 436h1v1h-1zM577 438h1v1h-1zM579 428h1v1h-1zM579 440h1v1h-1zM581 428h1v1h-1zM581 430h1v1h-1zM581 432h1v1h-1zM581 434h1v1h-1zM581 436h1v1h-1zM581 438h1v1h-1zM581 440h1v1h-1zM583 428h1v1h-1zM583 440h1v1h-1zM585 430h1v1h-1zM585 432h1v1h-1zM585 434h1v1h-1zM585 438h1v1h-1zM587 430h1v1h-1zM587 432h1v1h-1zM587 436h1v1h-1zM587 438h1v1h-1zM589 430h1v1h-1zM589 434h1v1h-1zM589 436h1v1h-1zM589 438h1v1h-1zM591 428h1v1h-1zM591 440h1v1h-1zM593 428h1v1h-1zM593 430h1v1h-1zM593 432h1v1h-1zM593 434h1v1h-1zM593 436h1v1h-1zM593 438h1v1h-1zM593 440h1v1h-1zM595 428h1v1h-1zM595 430h1v1h-1zM595 432h1v1h-1zM595 434h1v1h-1zM595 436h1v1h-1zM595 438h1v1h-1zM595 440h1v1h-1zM597 428h1v1h-1zM597 430h1v1h-1zM597 432h1v1h-1zM597 434h1v1h-1zM597 436h1v1h-1zM597 438h1v1h-1zM597 440h1v1h-1zM599 428h1v1h-1zM599 430h1v1h-1zM599 434h1v1h-1zM599 436h1v1h-1zM599 440h1v1h-1zM601 428h1v1h-1zM601 430h1v1h-1zM601 432h1v1h-1zM601 434h1v1h-1zM601 436h1v1h-1zM601 438h1v1h-1zM601 440h1v1h-1zM603 428h1v1h-1zM603 430h1v1h-1zM603 432h1v1h-1zM603 434h1v1h-1zM603 436h1v1h-1zM603 438h1v1h-1zM603 440h1v1h-1zM605 428h1v1h-1zM605 430h1v1h-1zM605 432h1v1h-1zM605 434h1v1h-1zM605 436h1v1h-1zM605 438h1v1h-1zM605 440h1v1h-1zM607 428h1v1h-1zM607 440h1v1h-1zM609 430h1v1h-1zM609 432h1v1h-1zM609 434h1v1h-1zM609 438h1v1h-1zM611 430h1v1h-1zM611 432h1v1h-1zM611 436h1v1h-1zM611 438h1v1h-1zM613 430h1v1h-1zM613 434h1v1h-1zM613 436h1v1h-1zM613 438h1v1h-1zM615 428h1v1h-1zM615 440h1v1h-1zM617 428h1v1h-1zM617 430h1v1h-1zM617 432h1v1h-1zM617 434h1v1h-1zM617 436h1v1h-1zM617 438h1v1h-1zM617 440h1v1h-1zM619 428h1v1h-1zM619 440h1v1h-1zM621 430h1v1h-1zM621 432h1v1h-1zM621 434h1v1h-1zM621 438h1v1h-1zM623 430h1v1h-1zM623 432h1v1h-1zM623 436h1v1h-1zM623 438h1v1h-1zM625 430h1v1h-1zM625 434h1v1h-1zM625 436h1v1h-1zM625 438h1v1h-1zM627 428h1v1h-1zM627 440h1v1h-1zM629 428h1v1h-1zM629 430h1v1h-1zM629 432h1v1h-1zM629 434h1v1h-1zM629 436h1v1h-1zM629 438h1v1h-1zM629 440h1v1h-1zM631 428h1v1h-1zM631 430h1v1h-1zM631 432h1v1h-1zM631 434h1v1h-1zM631 436h1v1h-1zM631 438h1v1h-1zM631 440h1v1h-1zM633 428h1v1h-1zM633 430h1v1h-1zM633 432h1v1h-1zM633 434h1v1h-1zM633 436h1v1h-1zM633 438h1v1h-1zM633 440h1v1h-1zM635 428h1v1h-1zM635 430h1v1h-1zM635 434h1v1h-1zM635 436h1v1h-1zM635 440h1v1h-1zM637 428h1v1h-1zM637 430h1v1h-1zM637 432h1v1h-1zM637 434h1v1h-1zM637 436h1v1h-1zM637 438h1v1h-1zM637 440h1v1h-1zM639 428h1v1h-1zM639 430h1v1h-1zM639 432h1v1h-1zM639 434h1v1h-1zM639 436h1v1h-1zM639 438h1v1h-1zM639 440h1v1h-1zM641 428h1v1h-1zM641 430h1v1h-1zM641 432h1v1h-1zM641 434h1v1h-1zM641 436h1v1h-1zM641 438h1v1h-1zM641 440h1v1h-1zM643 428h1v1h-1zM643 440h1v1h-1zM645 430h1v1h-1zM645 432h1v1h-1zM645 434h1v1h-1zM645 438h1v1h-1zM647 430h1v1h-1zM647 432h1v1h-1zM647 436h1v1h-1zM647 438h1v1h-1zM649 430h1v1h-1zM649 434h1v1h-1zM649 436h1v1h-1zM649 438h1v1h-1zM651 428h1v1h-1zM651 440h1v1h-1zM653 428h1v1h-1zM653 430h1v1h-1zM653 432h1v1h-1zM653 434h1v1h-1zM653 436h1v1h-1zM653 438h1v1h-1zM653 440h1v1h-1zM655 428h1v1h-1zM655 440h1v1h-1zM657 430h1v1h-1zM657 432h1v1h-1zM657 434h1v1h-1zM657 438h1v1h-1zM659 430h1v1h-1zM659 432h1v1h-1zM659 436h1v1h-1zM659 438h1v1h-1zM661 430h1v1h-1zM661 434h1v1h-1zM661 436h1v1h-1zM661 438h1v1h-1zM663 428h1v1h-1zM663 440h1v1h-1zM665 428h1v1h-1zM665 430h1v1h-1zM665 432h1v1h-1zM665 434h1v1h-1zM665 436h1v1h-1zM665 438h1v1h-1zM665 440h1v1h-1z" fill="#1e3220"/><path d="M571 430h1v1h-1zM571 432h1v1h-1zM571 434h1v1h-1zM571 436h1v1h-1zM571 438h1v1h-1zM573 428h1v1h-1zM573 436h1v1h-1zM573 440h1v1h-1zM575 428h1v1h-1zM575 434h1v1h-1zM575 440h1v1h-1zM577 428h1v1h-1zM577 432h1v1h-1zM577 440h1v1h-1zM579 430h1v1h-1zM579 432h1v1h-1zM579 434h1v1h-1zM579 436h1v1h-1zM579 438h1v1h-1zM583 430h1v1h-1zM583 432h1v1h-1zM583 434h1v1h-1zM583 436h1v1h-1zM583 438h1v1h-1zM585 428h1v1h-1zM585 436h1v1h-1zM585 440h1v1h-1zM587 428h1v1h-1zM587 434h1v1h-1zM587 440h1v1h-1zM589 428h1v1h-1zM589 432h1v1h-1zM589 440h1v1h-1zM591 430h1v1h-1zM591 432h1v1h-1zM591 434h1v1h-1zM591 436h1v1h-1zM591 438h1v1h-1zM599 432h1v1h-1zM599 438h1v1h-1zM607 430h1v1h-1zM607 432h1v1h-1zM607 434h1v1h-1zM607 436h1v1h-1zM607 438h1v1h-1zM609 428h1v1h-1zM609 436h1v1h-1zM609 440h1v1h-1zM611 428h1v1h-1zM611 434h1v1h-1zM611 440h1v1h-1zM613 428h1v1h-1zM613 432h1v1h-1zM613 440h1v1h-1zM615 430h1v1h-1zM615 432h1v1h-1zM615 434h1v1h-1zM615 436h1v1h-1zM615 438h1v1h-1zM619 430h1v1h-1zM619 432h1v1h-1zM619 434h1v1h-1zM619 436h1v1h-1zM619 438h1v1h-1zM621 428h1v1h-1zM621 436h1v1h-1zM621 440h1v1h-1zM623 428h1v1h-1zM623 434h1v1h-1zM623 440h1v1h-1zM625 428h1v1h-1zM625 432h1v1h-1zM625 440h1v1h-1zM627 430h1v1h-1zM627 432h1v1h-1zM627 434h1v1h-1zM627 436h1v1h-1zM627 438h1v1h-1zM635 432h1v1h-1zM635 438h1v1h-1zM643 430h1v1h-1zM643 432h1v1h-1zM643 434h1v1h-1zM643 436h1v1h-1zM643 438h1v1h-1zM645 428h1v1h-1zM645 436h1v1h-1zM645 440h1v1h-1zM647 428h1v1h-1zM647 434h1v1h-1zM647 440h1v1h-1zM649 428h1v1h-1zM649 432h1v1h-1zM649 440h1v1h-1zM651 430h1v1h-1zM651 432h1v1h-1zM651 434h1v1h-1zM651 436h1v1h-1zM651 438h1v1h-1zM655 430h1v1h-1zM655 432h1v1h-1zM655 434h1v1h-1zM655 436h1v1h-1zM655 438h1v1h-1zM657 428h1v1h-1zM657 436h1v1h-1zM657 440h1v1h-1zM659 428h1v1h-1zM659 434h1v1h-1zM659 440h1v1h-1zM661 428h1v1h-1zM661 432h1v1h-1zM661 440h1v1h-1zM663 430h1v1h-1zM663 432h1v1h-1zM663 434h1v1h-1zM663 436h1v1h-1zM663 438h1v1h-1z" fill="#ecebb4"/></svg>
<div style="left:678px;top:74px;width:2px;height:405px;background:#b4b4b4"></div>
<div style="left:680px;top:74px;width:70px;height:405px;background:#5f6d81"></div>
<div style="left:686px;top:90px;width:63px;height:46px;border-radius:4px;border:1px solid #f0f0f0;box-sizing:border-box;background:#000"></div>
<div style="left:687px;top:91px;width:61px;height:44px;border-radius:3px;background:linear-gradient(#ff3030,#e80000 60%,#d00000)"></div>
<div style="left:692.4px;top:106.92px;font-size:12.5px;line-height:12.5px;font-weight:400;color:#fff;transform:scaleX(1.0133);transform-origin:0 0;">Break All</div>
<div style="left:704px;top:142px;width:28px;height:9px;background:#8a8a8a;border:1px solid #000;box-sizing:border-box"></div>
<div style="left:686px;top:174px;width:63px;height:25px;border-radius:4px;border:1px solid #f0f0f0;box-sizing:border-box;background:#000"></div>
<div style="left:687px;top:175px;width:61px;height:23px;border-radius:3px;background:linear-gradient(#9a9a9a,#6e6e6e 55%,#4a4a4a)"></div>
<div style="left:701.0px;top:181.72px;font-size:12.5px;line-height:12.5px;font-weight:400;color:#fff;transform:scaleX(0.9942);transform-origin:0 0;">Sleep</div>
<div style="left:701px;top:192.5px;width:8px;height:1px;background:#fff"></div>
<div style="left:686px;top:218px;width:63px;height:25px;border-radius:4px;border:1px solid #f0f0f0;box-sizing:border-box;background:#000"></div>
<div style="left:687px;top:219px;width:61px;height:23px;border-radius:3px;background:linear-gradient(#9a9a9a,#6e6e6e 55%,#4a4a4a)"></div>
<div style="left:698.5px;top:225.42px;font-size:12.5px;line-height:12.5px;font-weight:400;color:#fff;transform:scaleX(1.0072);transform-origin:0 0;">Recall</div>
<div style="left:711px;top:236.6px;width:7px;height:1px;background:#fff"></div>
<div style="left:686px;top:340px;width:25px;height:13px;background:#8c8c8c;border:1px solid #000;box-sizing:border-box"></div>
<div style="left:726px;top:340px;width:24px;height:13px;background:#8c8c8c;border:1px solid #000;border-right:none;box-sizing:border-box"></div>
<div style="left:688.4px;top:355.00px;font-size:13px;line-height:13px;font-weight:400;color:#101010;transform:scaleX(0.8180);transform-origin:0 0;">Rd</div>
<div style="left:728.6px;top:355.00px;font-size:13px;line-height:13px;font-weight:400;color:#101010;transform:scaleX(1.0508);transform-origin:0 0;">Wrt</div>
<div style="left:686px;top:377px;width:63px;height:24px;border-radius:4px;border:1px solid #f0f0f0;box-sizing:border-box;background:#000"></div>
<div style="left:687px;top:378px;width:61px;height:22px;border-radius:3px;background:linear-gradient(#d00000,#a00000 50%,#600000)"></div>
<div style="left:701.0px;top:383.42px;font-size:12.5px;line-height:12.5px;font-weight:400;color:#fff;transform:scaleX(0.9554);transform-origin:0 0;">Passp</div>
<div style="left:686px;top:423px;width:63px;height:24px;border-radius:4px;border:1px solid #f0f0f0;box-sizing:border-box;background:#000"></div>
<div style="left:687px;top:424px;width:61px;height:22px;border-radius:3px;background:linear-gradient(#0000d0,#0000a0 50%,#000060)"></div>
<div style="left:699.0px;top:429.42px;font-size:12.5px;line-height:12.5px;font-weight:400;color:#fff;transform:scaleX(1.0046);transform-origin:0 0;">Power</div>
<div style="left:699px;top:441px;width:8px;height:1px;background:#e8e070"></div>
<div style="left:678px;top:479px;width:72px;height:218px;background:#b4b4b4"></div>
<div style="left:680px;top:479px;width:70px;height:3px;background:#c2c4c6"></div>
<div style="left:680px;top:482px;width:70px;height:1px;background:#a4a4a4"></div>
<div style="left:680px;top:482px;width:1px;height:215px;background:#a0a0a0"></div>
<div style="left:681px;top:483px;width:69px;height:214px;background:#bcbcbc"></div>
<div style="left:685px;top:490px;width:12px;height:12px;background:#fff;border:1px solid #a0a0a0;box-sizing:border-box"></div>
<div style="left:703.0px;top:489.50px;font-size:13px;line-height:13px;font-weight:700;color:#10108a;transform:scaleX(0.9872);transform-origin:0 0;">sound</div>
<div style="left:685.0px;top:653.69px;font-size:11px;line-height:11px;font-weight:400;color:#101010;transform:scaleX(0.9467);transform-origin:0 0;">API number</div>
<div style="left:685px;top:667px;width:65px;height:23px;background:#fff;border:1px solid #d8d8d8;box-sizing:border-box"></div>
<div style="left:685px;top:667px;width:14px;height:23px;background:#f4f4f4;border:1px solid #d8d8d8;box-sizing:border-box"></div>
<div style="left:688px;top:678px;width:8px;height:2px;background:#a8b4d0"></div>
<div style="left:739px;top:667px;width:11px;height:23px;background:#f4f4f4;border:1px solid #d8d8d8;border-right:none;box-sizing:border-box"></div>
<div style="left:742px;top:678px;width:8px;height:2px;background:#a8b4d0"></div>
<div style="left:745px;top:675px;width:2px;height:8px;background:#a8b4d0"></div>
<div style="left:715.5px;top:671.65px;font-size:14px;line-height:14px;font-weight:700;color:#10107a;">2</div>
<div style="left:1px;top:448px;width:677px;height:4px;background:#b4b4b4"></div>
<div style="left:1px;top:452px;width:677px;height:1px;background:#848484"></div>
<div style="left:1px;top:453px;width:677px;height:4px;background:#b8b8b8"></div>
<div style="left:2px;top:457px;width:676px;height:1px;background:#6e6e6e"></div>
<div style="left:2px;top:458px;width:676px;height:239px;background:#fff"></div>
<div style="left:2px;top:457px;width:1px;height:240px;background:#5a5a5a"></div>
<div style="left:3px;top:459px;width:657px;height:220px;background:#edfbed"></div>
<svg style="left:0;top:0" width="680" height="698"><path d="M3 476.5H659M3 493.5H659M3 510.5H659M3 527.5H659M3 544.5H659M3 561.5H659M3 578.5H659M3 595.5H659M3 612.5H659M3 629.5H659M3 646.5H659M3 663.5H659M3 680.5H659M68.5 458V679" stroke="#e2f0e2" stroke-width="1" fill="none"/></svg>
<div style="left:9.5px;top:462.99px;font-size:12.3px;line-height:12.3px;font-weight:400;color:#000;transform:scaleX(1.0590);transform-origin:0 0;">19:50:50</div>
<div style="left:74.2px;top:462.99px;font-size:12.3px;line-height:12.3px;font-weight:400;color:#000;transform:scaleX(1.0281);transform-origin:0 0;">API access enabled, device #1</div>
<div style="left:9.5px;top:479.99px;font-size:12.3px;line-height:12.3px;font-weight:400;color:#000;transform:scaleX(1.0590);transform-origin:0 0;">19:50:50</div>
<div style="left:74.2px;top:479.99px;font-size:12.3px;line-height:12.3px;font-weight:400;color:#000;transform:scaleX(1.0182);transform-origin:0 0;">Get passport... OK</div>
<div style="left:9.5px;top:496.99px;font-size:12.3px;line-height:12.3px;font-weight:400;color:#000;transform:scaleX(1.0590);transform-origin:0 0;">19:50:50</div>
<div style="left:74.2px;top:496.99px;font-size:12.3px;line-height:12.3px;font-weight:400;color:#000;transform:scaleX(1.0230);transform-origin:0 0;">48bit access enabled</div>
<div style="left:9.5px;top:513.99px;font-size:12.3px;line-height:12.3px;font-weight:400;color:#000;transform:scaleX(1.0590);transform-origin:0 0;">19:50:50</div>
<div style="left:74.2px;top:513.99px;font-size:12.3px;line-height:12.3px;font-weight:400;color:#000;transform:scaleX(1.0053);transform-origin:0 0;">Model: SAMSUNG HD321KJ; Capacity: 625142448 LBAs; SN: S0MQJ1CP202520; FW: CP100-10</div>
<div style="left:9.5px;top:530.99px;font-size:12.3px;line-height:12.3px;font-weight:400;color:#000;transform:scaleX(1.0590);transform-origin:0 0;">19:50:58</div>
<div style="left:74.2px;top:530.99px;font-size:12.3px;line-height:12.3px;font-weight:400;color:#000;transform:scaleX(1.0325);transform-origin:0 0;">Get S.M.A.R.T. command... OK</div>
<div style="left:9.5px;top:547.99px;font-size:12.3px;line-height:12.3px;font-weight:400;color:#000;transform:scaleX(1.0590);transform-origin:0 0;">19:50:58</div>
<div style="left:74.2px;top:547.99px;font-size:12.3px;line-height:12.3px;font-weight:400;color:#000;transform:scaleX(0.9983);transform-origin:0 0;">SMART status = GOOD</div>
<div style="left:9.5px;top:564.99px;font-size:12.3px;line-height:12.3px;font-weight:400;color:#000;transform:scaleX(1.0590);transform-origin:0 0;">19:51:02</div>
<div style="left:74.2px;top:564.99px;font-size:12.3px;line-height:12.3px;font-weight:400;color:#000;transform:scaleX(1.0182);transform-origin:0 0;">Get passport... OK</div>
<div style="left:9.5px;top:581.99px;font-size:12.3px;line-height:12.3px;font-weight:400;color:#000;transform:scaleX(1.0590);transform-origin:0 0;">19:51:02</div>
<div style="left:74.2px;top:581.99px;font-size:12.3px;line-height:12.3px;font-weight:400;color:#000;transform:scaleX(1.0280);transform-origin:0 0;">Recallibration... OK</div>
<div style="left:9.5px;top:598.99px;font-size:12.3px;line-height:12.3px;font-weight:400;color:#000;transform:scaleX(1.0590);transform-origin:0 0;">19:51:02</div>
<div style="left:74.2px;top:598.99px;font-size:12.3px;line-height:12.3px;font-weight:400;color:#000;transform:scaleX(1.0382);transform-origin:0 0;">Starting Reading, LBA=0..625142447, sequential access, timeout 10000ms</div>
<div style="left:9.5px;top:615.99px;font-size:12.3px;line-height:12.3px;font-weight:400;color:#000;transform:scaleX(1.0590);transform-origin:0 0;">20:24:19</div>
<div style="left:74.2px;top:615.99px;font-size:12.3px;line-height:12.3px;font-weight:400;color:#d02020;transform:scaleX(1.0497);transform-origin:0 0;">Warning! Block start at 288715008 = 562 ms</div>
<div style="left:9.5px;top:632.99px;font-size:12.3px;line-height:12.3px;font-weight:400;color:#000;transform:scaleX(1.0590);transform-origin:0 0;">20:55:22</div>
<div style="left:74.2px;top:632.99px;font-size:12.3px;line-height:12.3px;font-weight:400;color:#d02020;transform:scaleX(1.0502);transform-origin:0 0;">Warning! Block start at 509322752 = 31031 ms</div>
<div style="left:9.5px;top:649.99px;font-size:12.3px;line-height:12.3px;font-weight:400;color:#000;transform:scaleX(1.0590);transform-origin:0 0;">21:16:36</div>
<div style="left:74.4px;top:649.99px;font-size:12.3px;line-height:12.3px;font-weight:400;color:#1c1cc0;transform:scaleX(1.6125);transform-origin:0 0;">*****</div>
<div style="left:118.7px;top:649.99px;font-size:12.3px;line-height:12.3px;font-weight:400;color:#1c1cc0;transform:scaleX(1.0715);transform-origin:0 0;">Scan results: Warnings - 2, errors - 0</div>
<div style="left:339.0px;top:649.99px;font-size:12.3px;line-height:12.3px;font-weight:400;color:#1c1cc0;transform:scaleX(1.5958);transform-origin:0 0;">*****</div>
<div style="left:660px;top:458px;width:16px;height:221px;background:#f0f0f0"></div>
<div style="left:661px;top:522px;width:14px;height:140px;background:#cdcdcd"></div>
<svg style="left:660px;top:458px" width="16" height="221" viewBox="0 0 16 221"><path d="M4 11.5L8 7.5L12 11.5" stroke="#606060" stroke-width="2" fill="none"/><path d="M4 209.5L8 213.5L12 209.5" stroke="#606060" stroke-width="2" fill="none"/></svg>
<div style="left:3px;top:679px;width:673px;height:17px;background:#f0f0f0"></div>
<div style="left:20px;top:680px;width:472px;height:15px;background:#cdcdcd"></div>
<svg style="left:3px;top:679px" width="673" height="17" viewBox="0 0 673 17"><path d="M10.5 4.5L6.5 8.5L10.5 12.5" stroke="#505050" stroke-width="2" fill="none"/><path d="M645 4.5L649 8.5L645 12.5" stroke="#606060" stroke-width="2" fill="none"/></svg>
<div style="left:751px;top:0px;width:257px;height:698px;background:#fff"></div>
<div style="left:0px;top:0px;width:751px;height:698px;border:1px solid #3d6fa3;box-sizing:border-box"></div>
</body></html>
